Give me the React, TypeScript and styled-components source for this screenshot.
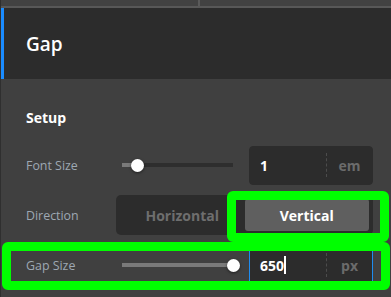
import React from "react";
import styled, { createGlobalStyle } from "styled-components";

const Global = createGlobalStyle`
  html, body { margin: 0; padding: 0; background: #404040; }
  body { font-family: "Open Sans", "Noto Sans", sans-serif; }
  * { box-sizing: border-box; }
`;

const Frame = styled.div`
  position: relative;
  width: 391px;
  height: 297px;
  overflow: hidden;
  background: #404040;
  border-left: 1px solid #2f2f2f;
  display: flex;
  flex-direction: column;
`;

const TopStrip = styled.div`
  height: 6px;
  display: flex;
  background: #424242;
`;

const TopCell = styled.div<{ $w?: number }>`
  width: ${(p) => (p.$w ? `${p.$w}px` : "auto")};
  flex: ${(p) => (p.$w ? "none" : "1")};
  border-right: ${(p) => (p.$w ? "2px solid #5a5a5a" : "none")};
`;

const TopRule = styled.div`
  height: 2px;
  background: #585858;
`;

const Header = styled.div`
  height: 71px;
  background: #2c2c2c;
  border-left: 3px solid #1a8cff;
  display: flex;
  align-items: center;
  padding-left: 22px;
  color: #ffffff;
  font-size: 19px;
  font-weight: 600;
`;

const Panel = styled.div`
  padding: 29px 0 0 25px;
  display: flex;
  flex-direction: column;
`;

const SectionTitle = styled.div`
  color: #ffffff;
  font-size: 14px;
  font-weight: 700;
  line-height: 20px;
  margin-bottom: 17px;
`;

const Rows = styled.div`
  display: flex;
  flex-direction: column;
  gap: 10px;
`;

const Row = styled.div`
  display: grid;
  grid-template-columns: 90px 257px;
  align-items: center;
  height: 40px;
`;

const Label = styled.div`
  color: #9ea8b3;
  font-size: 12.4px;
  font-weight: 400;
`;

const SliderInput = styled.div`
  display: flex;
  align-items: center;
  gap: 6px;
`;

const SliderArea = styled.div`
  width: 127px;
  padding: 0 10px 0 6px;
  display: flex;
  align-items: center;
`;

const Track = styled.div`
  position: relative;
  width: 100%;
  height: 4px;
  background: #2e2e2e;
`;

const Fill = styled.div`
  height: 100%;
  background: #7a7a7a;
`;

const Thumb = styled.div`
  position: absolute;
  top: 50%;
  width: 13px;
  height: 13px;
  margin: -6.5px 0 0 -6.5px;
  border-radius: 50%;
  background: #ffffff;
  box-shadow: 0 1px 3px rgba(0, 0, 0, 0.5);
`;

const NumBox = styled.div<{ $focus?: boolean }>`
  width: 124px;
  height: 39px;
  border-radius: 4px;
  background: #2c2c2c;
  border: 1px solid ${(p) => (p.$focus ? "#1e8cf0" : "#2c2c2c")};
  display: flex;
  align-items: center;
`;

const NumValue = styled.div`
  flex: 1;
  padding-left: 10px;
  color: #ffffff;
  font-size: 14px;
  font-weight: 700;
  display: flex;
  align-items: center;
`;

const Caret = styled.span`
  display: inline-block;
  width: 2px;
  height: 18px;
  background: #ffffff;
`;

const Unit = styled.div`
  width: 46px;
  height: 24px;
  border-left: 1px dashed #4c4c4c;
  display: flex;
  align-items: center;
  justify-content: center;
  color: #6b6b6b;
  font-size: 14px;
  font-weight: 700;
`;

const Segmented = styled.div`
  height: 40px;
  padding: 4px;
  border-radius: 5px;
  background: #2c2c2c;
  display: flex;
`;

const SegButton = styled.div<{ $active?: boolean }>`
  flex: 1;
  display: flex;
  align-items: center;
  justify-content: center;
  border-radius: 3px;
  background: ${(p) => (p.$active ? "#5f5f5f" : "transparent")};
  color: ${(p) => (p.$active ? "#ffffff" : "#6e6e6e")};
  font-size: 14px;
  font-weight: 700;
`;

const Highlight = styled.div<{ $x: number; $y: number; $w: number; $h: number }>`
  position: absolute;
  left: ${(p) => p.$x}px;
  top: ${(p) => p.$y}px;
  width: ${(p) => p.$w}px;
  height: ${(p) => p.$h}px;
  border: 9px solid #00ff00;
  border-radius: 6px;
  pointer-events: none;
`;

function Slider({ pct }: { pct: number }) {
  return (
    <SliderArea>
      <Track>
        <Fill style={{ width: `${pct}%` }} />
        <Thumb style={{ left: `${pct}%` }} />
      </Track>
    </SliderArea>
  );
}

export default function App() {
  return (
    <>
      <Global />
      <Frame>
        <TopStrip>
          <TopCell $w={199} />
          <TopCell />
        </TopStrip>
        <TopRule />
        <Header>Gap</Header>
        <Panel>
          <SectionTitle>Setup</SectionTitle>
          <Rows>
            <Row>
              <Label>Font Size</Label>
              <SliderInput>
                <Slider pct={14} />
                <NumBox>
                  <NumValue>1</NumValue>
                  <Unit>em</Unit>
                </NumBox>
              </SliderInput>
            </Row>
            <Row>
              <Label>Direction</Label>
              <Segmented>
                <SegButton>Horizontal</SegButton>
                <SegButton $active>Vertical</SegButton>
              </Segmented>
            </Row>
            <Row>
              <Label>Gap Size</Label>
              <SliderInput>
                <Slider pct={100} />
                <NumBox $focus>
                  <NumValue>
                    650
                    <Caret />
                  </NumValue>
                  <Unit>px</Unit>
                </NumBox>
              </SliderInput>
            </Row>
          </Rows>
        </Panel>
        <Highlight $x={226} $y={191} $w={162} $h={51} />
        <Highlight $x={1} $y={242} $w={388} $h={48} />
      </Frame>
    </>
  );
}
